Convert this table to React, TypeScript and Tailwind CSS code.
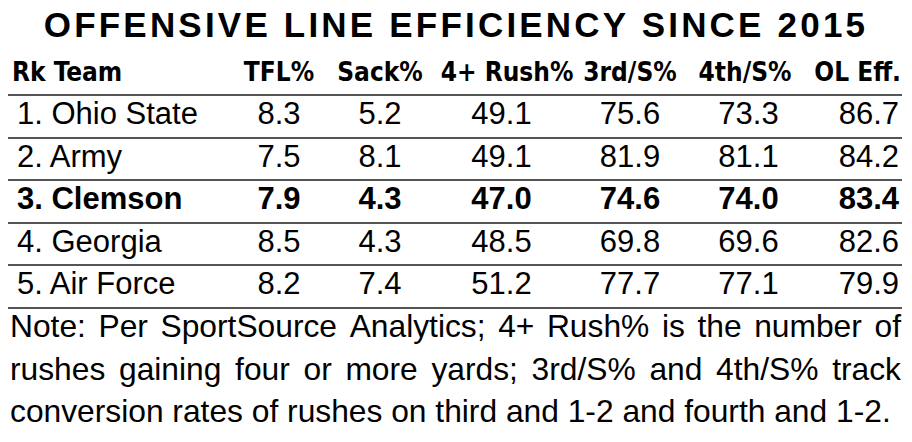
import React from "react";

type Row = { rank: string; team: string; vals: string[]; bold?: boolean };

const rows: Row[] = [
  { rank: "1.", team: "Ohio State", vals: ["8.3", "5.2", "49.1", "75.6", "73.3", "86.7"] },
  { rank: "2.", team: "Army", vals: ["7.5", "8.1", "49.1", "81.9", "81.1", "84.2"] },
  { rank: "3.", team: "Clemson", vals: ["7.9", "4.3", "47.0", "74.6", "74.0", "83.4"], bold: true },
  { rank: "4.", team: "Georgia", vals: ["8.5", "4.3", "48.5", "69.8", "69.6", "82.6"] },
  { rank: "5.", team: "Air Force", vals: ["8.2", "7.4", "51.2", "77.7", "77.1", "79.9"] },
];

const line1 = "Note: Per SportSource Analytics; 4+ Rush% is the number of".split(" ");
const line2 = "rushes gaining four or more yards; 3rd/S% and 4th/S% track".split(" ");

export default function App() {
  return (
    <div className="w-[912px] h-[442px] bg-white text-black overflow-hidden font-['Liberation_Sans',Arial,sans-serif]">
      <div className="h-[45px] pt-[5px] text-center text-[35px] leading-[40px] font-bold tracking-[3.2px] whitespace-nowrap">
        OFFENSIVE LINE EFFICIENCY SINCE 2015
      </div>

      <div className="ml-[8px] w-[894px]">
        <div className="grid grid-cols-[220px_102px_100px_146px_108px_126px_92px] h-[51px] items-end pb-[6px] border-b-2 border-[#555] text-[26px] leading-[32px] font-bold tracking-[0px] whitespace-nowrap font-['DejaVu_Sans_Condensed','Liberation_Sans_Narrow',sans-serif]">
          <div className="pl-[4px]">Rk Team</div>
          <div className="text-center">TFL%</div>
          <div className="text-center">Sack%</div>
          <div className="text-center pl-[8px]">4+ Rush%</div>
          <div className="text-center">3rd/S%</div>
          <div className="text-center pr-[4px]">4th/S%</div>
          <div className="text-right pr-[1px]">OL Eff.</div>
        </div>

        {rows.map((r) => (
          <div
            key={r.rank}
            className={
              "grid grid-cols-[220px_102px_100px_146px_108px_126px_92px] h-[42.6px] items-start border-b-2 border-[#555] text-[31px] leading-[36px] whitespace-nowrap " +
              (r.bold ? "font-bold" : "font-normal")
            }
          >
            <div className="pl-[9px]">
              {r.rank} {r.team}
            </div>
            <div className="text-center">{r.vals[0]}</div>
            <div className="text-center">{r.vals[1]}</div>
            <div className="text-center pr-[3px]">{r.vals[2]}</div>
            <div className="text-center">{r.vals[3]}</div>
            <div className="text-center pl-[3px]">{r.vals[4]}</div>
            <div className="text-right pr-[3px]">{r.vals[5]}</div>
          </div>
        ))}
      </div>

      <div className="pl-[10px] pr-[11px] text-[31.75px] whitespace-nowrap">
        <div className="h-[42.75px] leading-[34px] flex justify-between">
          {line1.map((w, i) => (
            <span key={i}>{w}</span>
          ))}
        </div>
        <div className="h-[42.75px] leading-[34px] flex justify-between">
          {line2.map((w, i) => (
            <span key={i}>{w}</span>
          ))}
        </div>
        <div className="h-[42.75px] leading-[34px]">
          conversion rates of rushes on third and 1-2 and fourth and 1-2.
        </div>
      </div>
    </div>
  );
}
